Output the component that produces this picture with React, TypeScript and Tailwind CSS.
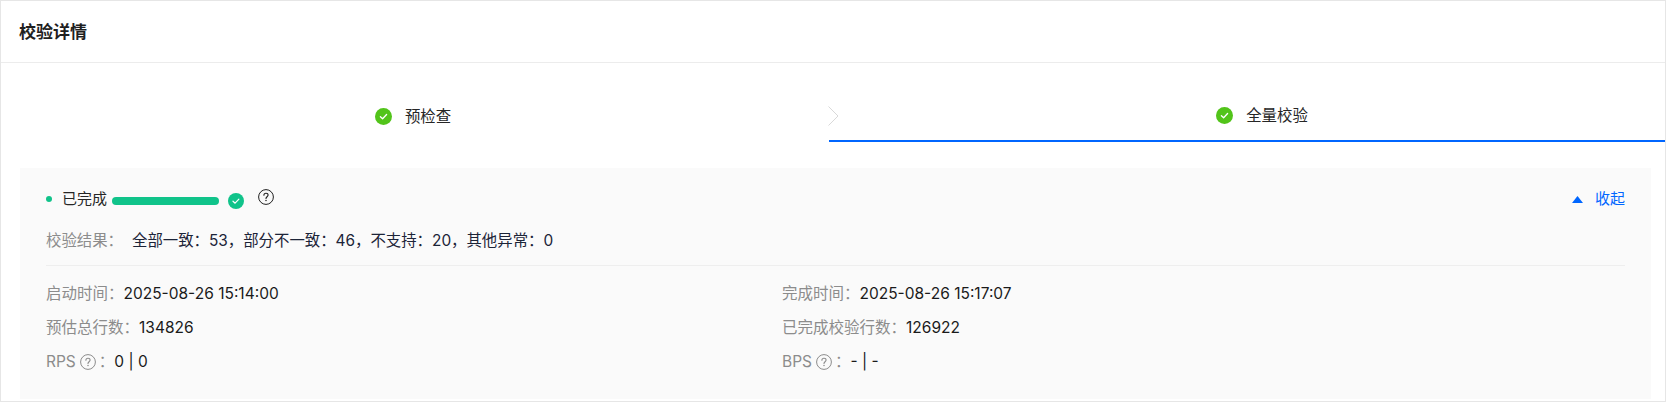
import type { ReactNode } from 'react';

const FONT = 'font-[Inter,"Noto_Sans_CJK_SC",sans-serif]';

function StepCheck() {
  return (
    <svg width="17" height="17" viewBox="0 0 17 17" className="shrink-0">
      <circle cx="8.5" cy="8.5" r="8.5" fill="#52c41a" />
      <path d="M5.4 8.7 7.6 10.8 11.6 6.5" fill="none" stroke="#fff" strokeWidth="1.3" strokeLinecap="round" strokeLinejoin="round" />
    </svg>
  );
}

function HelpIcon({ size, color }: { size: number; color: string }) {
  return (
    <svg width={size} height={size} viewBox="0 0 16 16" className="shrink-0">
      <circle cx="8" cy="8" r="7.4" fill="none" stroke={color} strokeWidth="1" />
      <path d="M5.9 6.2C5.9 5 6.8 4.2 8 4.2s2.1.8 2.1 1.9c0 1.6-2.1 1.6-2.1 3.3" fill="none" stroke={color} strokeWidth="1.1" strokeLinecap="round" />
      <circle cx="8" cy="11.5" r=".75" fill={color} />
    </svg>
  );
}

function Field({ label, children }: { label: ReactNode; children: ReactNode }) {
  return (
    <div className="flex h-[34px] items-center text-[15.5px]">
      <span className="flex items-center text-[#8c8c8c]">{label}</span>
      <span className="text-[#1a1a1a]">{children}</span>
    </div>
  );
}

export default function App() {
  return (
    <div className={`${FONT} h-[402px] w-[1666px] overflow-hidden border border-[#e6e6e6] bg-white`}>
      <div className="flex h-[62px] items-center border-b border-[#ececec] pl-[18px] pt-[2px]">
        <h1 className="text-[17px] font-semibold text-[#1f1f1f]">校验详情</h1>
      </div>

      <div className="relative grid grid-cols-[828px_1fr]">
        <div className="flex h-[79px] items-center justify-center gap-[13px] pr-[4px] pt-[28px]">
          <StepCheck />
          <span className="text-[15.4px] text-[#262626]">预检查</span>
        </div>
        <div className="flex h-[79px] items-center justify-center gap-[13px] border-b-2 border-[#0066ff] pl-[30px] pt-[28px]">
          <StepCheck />
          <span className="text-[15.4px] text-[#262626]">全量校验</span>
        </div>
        <svg width="11" height="20" viewBox="0 0 11 20" className="absolute left-[827px] top-[43px]">
          <path d="M.5.5 10 10 .5 19.5" fill="none" stroke="#d9d9d9" strokeWidth="1" />
        </svg>
      </div>

      <div className="ml-[19px] mr-[14px] mt-[26px] h-[231px] bg-[#fafafa] px-[26px]">
        <div className="flex h-[62px] items-center justify-between">
          <div className="flex items-center">
            <span className="mr-[10px] h-[6px] w-[6px] rounded-full bg-[#10c38a]" />
            <span className="text-[15px] text-[#262626]">已完成</span>
            <span className="ml-[5px] mt-[3px] h-[8px] w-[107px] rounded-full bg-[#10c38a]" />
            <svg width="16" height="16" viewBox="0 0 16 16" className="ml-[9px] mt-[3px]">
              <circle cx="8" cy="8" r="8" fill="#10c38a" />
              <path d="M5 8.2 7.1 10.2 10.9 6.1" fill="none" stroke="#fff" strokeWidth="1.2" strokeLinecap="round" strokeLinejoin="round" />
            </svg>
            <span className="ml-[14px] -mt-[4px]">
              <HelpIcon size={16} color="#1f1f1f" />
            </span>
          </div>
          <div className="flex items-center text-[15px] text-[#0066ff]">
            <svg width="11" height="7" viewBox="0 0 11 7" className="mr-[12px]">
              <path d="M5.5 0 11 7H0z" fill="#0066ff" />
            </svg>
            收起
          </div>
        </div>

        <div className="flex h-[22px] items-center text-[15.4px]">
          <span className="w-[86px] text-[#8c8c8c]">校验结果：</span>
          <span className="text-[#1c2438]">全部一致：53，部分不一致：46，不支持：20，其他异常：0</span>
        </div>

        <div className="mt-[13px] border-t border-[#eeeeee] pt-[11px]">
          <div className="grid grid-cols-[736px_1fr]">
            <Field label="启动时间：">2025-08-26 15:14:00</Field>
            <Field label="完成时间：">2025-08-26 15:17:07</Field>
            <Field label="预估总行数：">134826</Field>
            <Field label="已完成校验行数：">126922</Field>
            <Field label={<>RPS<span className="ml-[4px] mr-[3px]"><HelpIcon size={16} color="#8c8c8c" /></span>：</>}>0 | 0</Field>
            <Field label={<>BPS<span className="ml-[4px] mr-[3px]"><HelpIcon size={16} color="#8c8c8c" /></span>：</>}>- | -</Field>
          </div>
        </div>
      </div>
    </div>
  );
}
